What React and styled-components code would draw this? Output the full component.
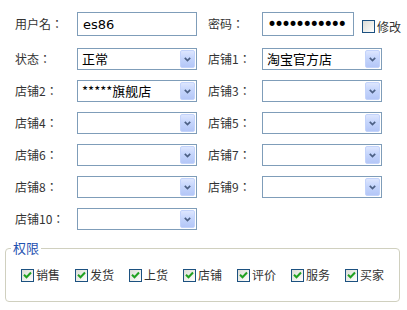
import React from "react";
import styled, { createGlobalStyle } from "styled-components";

const Global = createGlobalStyle`
  html, body { margin: 0; padding: 0; background: #fff; }
  body { font-family: "Noto Sans CJK SC", "DejaVu Sans", sans-serif; font-size: 12px; color: #333; }
`;

const Page = styled.div`
  padding: 12px 8px 0 5px;
  width: 407px;
  box-sizing: border-box;
`;

const FormGrid = styled.div`
  display: grid;
  grid-template-columns: 51px 120px 43px auto;
  column-gap: 11px;
  row-gap: ${(p) => p.$rowGap || 10}px;
  grid-auto-rows: ${(p) => p.$rowH || 22}px;
  align-items: center;
  padding-left: 10px;
  margin-bottom: ${(p) => p.$mb || 0}px;
`;

const Label = styled.div`
  white-space: nowrap;
  font-family: "Noto Sans CJK TC", "Noto Sans CJK SC", sans-serif;
  font-size: 12px;
  line-height: 16px;
  color: #333;
`;

const TextBox = styled.input`
  box-sizing: border-box;
  width: ${(p) => p.$w || 120}px;
  height: 24px;
  border: 1px solid #7f9db9;
  padding: 0 ${(p) => (p.type === "password" ? 4 : 5)}px;
  margin: 0;
  font-family: "DejaVu Sans", Verdana, sans-serif;
  font-size: ${(p) => (p.type === "password" ? 17 : 13)}px;
  color: #000;
  background: #fff;
  outline: none;
  letter-spacing: ${(p) => (p.type === "password" ? "-3px" : "0")};
`;

const PasswordCell = styled.div`
  display: flex;
  align-items: center;
  white-space: nowrap;
`;

const Check = styled.span`
  box-sizing: border-box;
  width: 13px;
  height: 13px;
  flex: none;
  border: 1px solid #1c5180;
  background: linear-gradient(135deg, #dcdcd7 0%, #efefeb 55%, #fff 100%);
  display: inline-flex;
  align-items: center;
  justify-content: center;
`;

const CheckLabel = styled.label`
  display: inline-flex;
  align-items: center;
  white-space: nowrap;
  font-size: 12px;
  line-height: 16px;
  color: #333;
  margin-left: ${(p) => p.$ml || 0}px;
  margin-top: ${(p) => p.$mt || 0}px;
`;

const CheckText = styled.span`
  margin-left: 2px;
`;

const Combo = styled.div`
  box-sizing: border-box;
  width: 120px;
  height: 22px;
  border: 1px solid #7f9db9;
  background: #fff;
  display: flex;
  align-items: center;
  padding: 1px;
`;

const ComboValue = styled.span`
  flex: 1;
  padding-left: 3px;
  font-size: 13px;
  line-height: 18px;
  color: #000;
  white-space: nowrap;
  overflow: hidden;
`;

const ComboButton = styled.span`
  box-sizing: border-box;
  width: 15px;
  height: 18px;
  flex: none;
  border: 1px solid #c3d3fb;
  border-radius: 2px;
  background: linear-gradient(180deg, #dde6fe 0%, #c5d5fc 45%, #b4c7f7 100%);
  display: flex;
  align-items: center;
  justify-content: center;
`;

const Chevron = () => (
  <svg width="7" height="5" viewBox="0 0 7 5">
    <path d="M0.8 0.8 L3.5 3.5 L6.2 0.8" fill="none" stroke="#4d6185" strokeWidth="1.7" />
  </svg>
);

const Tick = () => (
  <svg width="9" height="8" viewBox="0 0 9 8">
    <path d="M1 3.8 L3.5 6.3 L8 1.5" fill="none" stroke="#21a121" strokeWidth="2" />
  </svg>
);

const ComboBox = ({ value }) => (
  <Combo>
    <ComboValue>{value}</ComboValue>
    <ComboButton>
      <Chevron />
    </ComboButton>
  </Combo>
);

const Group = styled.fieldset`
  box-sizing: border-box;
  width: 395px;
  margin: 10px 0 0 0;
  padding: 11px 0 18px 15px;
  border: 1px solid #d0d0bf;
  border-radius: 4px;
`;

const Legend = styled.legend`
  margin-left: -10px;
  padding: 0 2px;
  font-size: 13px;
  line-height: 16px;
  color: #1f52b0;
`;

const PermRow = styled.div`
  display: flex;
  gap: 15px;
`;

const CheckBox = ({ checked, children, ml, mt }) => (
  <CheckLabel $ml={ml} $mt={mt}>
    <Check>{checked && <Tick />}</Check>
    <CheckText>{children}</CheckText>
  </CheckLabel>
);

const rows = [
  ["状态：", "正常", "店铺1：", "淘宝官方店"],
  ["店铺2：", "*****旗舰店", "店铺3：", ""],
  ["店铺4：", "", "店铺5：", ""],
  ["店铺6：", "", "店铺7：", ""],
  ["店铺8：", "", "店铺9：", ""],
];

const perms = ["销售", "发货", "上货", "店铺", "评价", "服务", "买家"];

export default function App() {
  return (
    <Page>
      <Global />
      <FormGrid $rowH={24} $mb={12}>
        <Label>用户名：</Label>
        <TextBox defaultValue="es86" />
        <Label>密码：</Label>
        <PasswordCell>
          <TextBox type="password" $w={92} defaultValue="12345678901" />
          <CheckBox ml={8} mt={5}>修改</CheckBox>
        </PasswordCell>
      </FormGrid>
      <FormGrid>
        {rows.map(([l1, v1, l2, v2]) => (
          <React.Fragment key={l1}>
            <Label>{l1}</Label>
            <ComboBox value={v1} />
            <Label>{l2}</Label>
            <ComboBox value={v2} />
          </React.Fragment>
        ))}
        <Label>店铺10：</Label>
        <ComboBox value="" />
      </FormGrid>
      <Group>
        <Legend>权限</Legend>
        <PermRow>
          {perms.map((p) => (
            <CheckBox key={p} checked>
              {p}
            </CheckBox>
          ))}
        </PermRow>
      </Group>
    </Page>
  );
}
